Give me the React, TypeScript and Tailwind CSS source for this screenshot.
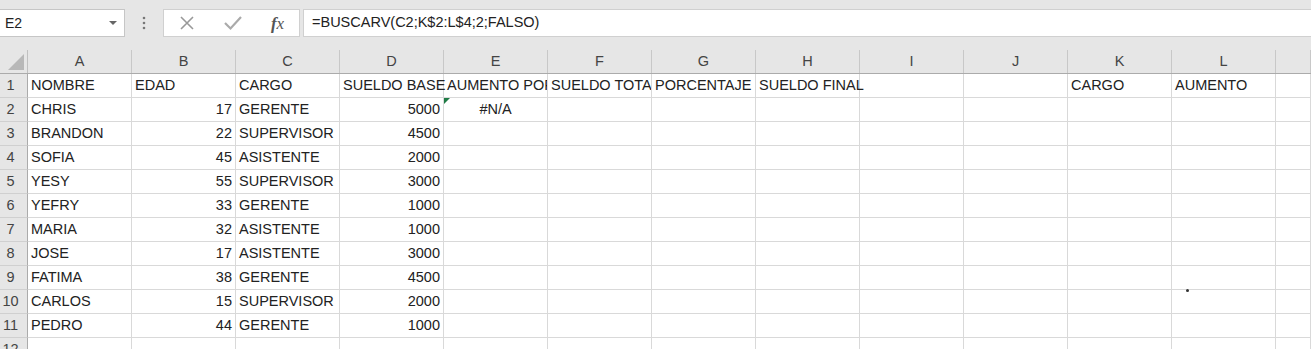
import React from "react";

const cols = ["A", "B", "C", "D", "E", "F", "G", "H", "I", "J", "K", "L", ""];

type Cell = { v?: string; right?: boolean; center?: boolean; clip?: boolean; err?: boolean };

const people: [string, number, string, number][] = [
  ["CHRIS", 17, "GERENTE", 5000],
  ["BRANDON", 22, "SUPERVISOR", 4500],
  ["SOFIA", 45, "ASISTENTE", 2000],
  ["YESY", 55, "SUPERVISOR", 3000],
  ["YEFRY", 33, "GERENTE", 1000],
  ["MARIA", 32, "ASISTENTE", 1000],
  ["JOSE", 17, "ASISTENTE", 3000],
  ["FATIMA", 38, "GERENTE", 4500],
  ["CARLOS", 15, "SUPERVISOR", 2000],
  ["PEDRO", 44, "GERENTE", 1000],
];

function buildRows(): Cell[][] {
  const header: Cell[] = [
    { v: "NOMBRE" },
    { v: "EDAD" },
    { v: "CARGO" },
    { v: "SUELDO BASE" },
    { v: "AUMENTO PORCENTAJE", clip: true },
    { v: "SUELDO TOTAL", clip: true },
    { v: "PORCENTAJE" },
    { v: "SUELDO FINAL" },
    {},
    {},
    { v: "CARGO" },
    { v: "AUMENTO" },
    {},
  ];
  const body = people.map(([n, e, c, s], i) => {
    const row: Cell[] = [
      { v: n },
      { v: String(e), right: true },
      { v: c },
      { v: String(s), right: true },
      i === 0 ? { v: "#N/A", center: true, err: true } : {},
    ];
    for (let k = 0; k < 8; k++) row.push({});
    return row;
  });
  const empty: Cell[] = cols.map(() => ({}));
  return [header, ...body, empty];
}

export default function App() {
  const rows = buildRows();
  const font = { fontFamily: '"Liberation Sans", Arial, sans-serif' };

  return (
    <div className="w-[1311px] h-[349px] overflow-hidden bg-white relative" style={font}>
      {/* formula bar */}
      <div className="h-[37px] bg-[#e6e6e6] flex items-start pt-[9px]">
        <div className="w-[125px] h-[28px] bg-white border border-[#c6c6c6] border-l-0 flex items-center justify-between pl-[5px] pr-[7px]">
          <span className="text-[14px] text-[#222]">E2</span>
          <svg width="8" height="5" viewBox="0 0 8 5">
            <path d="M0 0 L8 0 L4 4 Z" fill="#666" />
          </svg>
        </div>
        <div className="w-[38px] h-[28px] flex items-center justify-center">
          <svg width="4" height="14" viewBox="0 0 4 14">
            <circle cx="2" cy="2" r="1.3" fill="#777" />
            <circle cx="2" cy="7" r="1.3" fill="#777" />
            <circle cx="2" cy="12" r="1.3" fill="#777" />
          </svg>
        </div>
        <div className="w-[137px] h-[28px] bg-white border border-[#d0d0d0] flex items-center">
          <div className="w-[46px] flex justify-center">
            <svg width="16" height="16" viewBox="0 0 16 16">
              <path d="M2 2 L14 14 M14 2 L2 14" stroke="#999" strokeWidth="1.6" />
            </svg>
          </div>
          <div className="w-[46px] flex justify-center">
            <svg width="18" height="16" viewBox="0 0 18 16">
              <path d="M1 8 L6.5 13.5 L17 2" stroke="#aaa" strokeWidth="2.2" fill="none" />
            </svg>
          </div>
          <div className="w-[43px] flex justify-center">
            <span className="italic text-[17px] text-[#555] leading-none" style={{ fontFamily: '"Liberation Serif", "Times New Roman", serif' }}>
              <span className="font-bold">f</span>x
            </span>
          </div>
        </div>
        <div className="ml-[3px] flex-1 h-[28px] bg-white border border-[#d0d0d0] border-r-0 flex items-center pl-[8px]">
          <span className="text-[14.5px] text-[#222]">=BUSCARV(C2;K$2:L$4;2;FALSO)</span>
        </div>
      </div>

      {/* gap band */}
      <div className="h-[13px] bg-[#e6e6e6]" />

      {/* column headers */}
      <div className="grid grid-cols-[28px_repeat(12,104px)_35px] h-[24px] bg-[#e6e6e6] border-b border-[#ababab]">
        <div className="relative border-r border-[#c0c0c0]">
          <svg className="absolute right-[3px] bottom-[3px]" width="16" height="16" viewBox="0 0 16 16">
            <path d="M16 0 L16 16 L0 16 Z" fill="#b8b8b8" />
          </svg>
        </div>
        {cols.map((c, i) => (
          <div
            key={i}
            className="border-r border-[#c8c8c8] flex items-center justify-center text-[14.5px] text-[#444]"
          >
            {c}
          </div>
        ))}
      </div>

      {/* rows */}
      {rows.map((row, r) => (
        <div key={r} className="grid grid-cols-[28px_repeat(12,104px)_35px] h-[24px]">
          <div className="bg-[#e6e6e6] border-r border-[#ababab] border-b border-b-[#d0d0d0] flex items-center justify-center pr-[6px] text-[14.5px] text-[#444]">
            {r + 1}
          </div>
          {row.map((cell, c) => (
            <div
              key={c}
              className={
                "relative border-r border-b border-[#d9d9d9] flex items-center text-[14.5px] text-[#222] whitespace-nowrap " +
                (cell.right ? "justify-end pr-[3px] " : cell.center ? "justify-center " : "pl-[3px] ") +
                (cell.clip ? "overflow-hidden " : "") +
                (c === 7 && r === 0 ? "z-10 " : "")
              }
            >
              {cell.err && (
                <svg className="absolute left-0 top-0" width="6" height="6" viewBox="0 0 6 6">
                  <path d="M0 0 L6 0 L0 6 Z" fill="#1e7b45" />
                </svg>
              )}
              {cell.v}
            </div>
          ))}
        </div>
      ))}

      {/* stray cursor dot */}
      <div className="absolute left-[1186px] top-[289px] w-[3px] h-[3px] bg-[#333] rounded-full" />
    </div>
  );
}
